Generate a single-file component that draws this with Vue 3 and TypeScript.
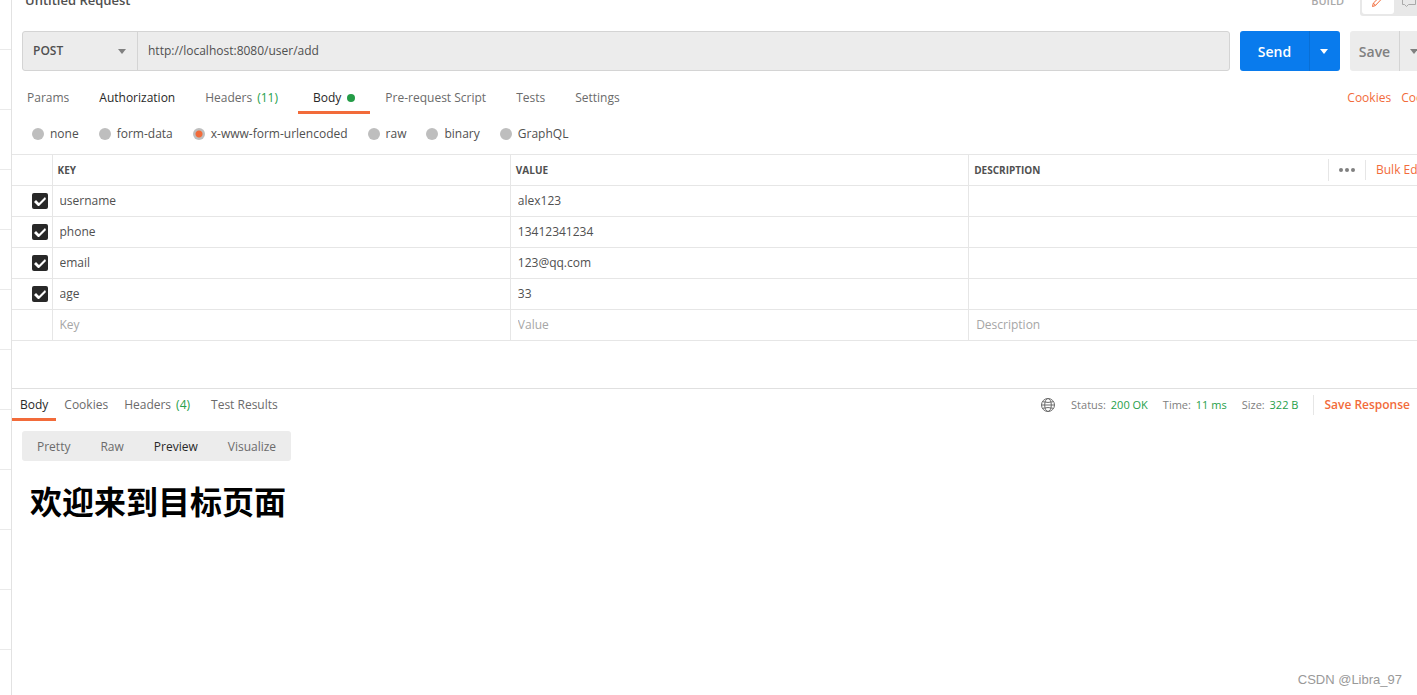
<script setup lang="ts">
import { ref } from 'vue'

interface Tab {
  label: string
  count?: number
  dot?: boolean
  strong?: boolean
}

interface Param {
  key: string
  value: string
  description: string
  enabled: boolean
}

const historyRows = 12

const method = ref('POST')
const methods = ['GET', 'POST', 'PUT', 'PATCH', 'DELETE']
const url = ref('http://localhost:8080/user/add')

const requestTabs: Tab[] = [
  { label: 'Params' },
  { label: 'Authorization', strong: true },
  { label: 'Headers', count: 11 },
  { label: 'Body', dot: true },
  { label: 'Pre-request Script' },
  { label: 'Tests' },
  { label: 'Settings' },
]
const requestTab = ref('Body')

const bodyModes = ['none', 'form-data', 'x-www-form-urlencoded', 'raw', 'binary', 'GraphQL']
const bodyMode = ref('x-www-form-urlencoded')

const params = ref<Param[]>([
  { key: 'username', value: 'alex123', description: '', enabled: true },
  { key: 'phone', value: '13412341234', description: '', enabled: true },
  { key: 'email', value: '123@qq.com', description: '', enabled: true },
  { key: 'age', value: '33', description: '', enabled: true },
])
const draft = ref({ key: '', value: '', description: '' })

const responseTabs: Tab[] = [
  { label: 'Body' },
  { label: 'Cookies' },
  { label: 'Headers', count: 4 },
  { label: 'Test Results' },
]
const responseTab = ref('Body')

const stats = [
  { label: 'Status:', value: '200 OK' },
  { label: 'Time:', value: '11 ms' },
  { label: 'Size:', value: '322 B' },
]

const views = ['Pretty', 'Raw', 'Preview', 'Visualize']
const view = ref('Preview')
</script>

<template>
  <div class="app">
    <aside class="sidebar" aria-label="History">
      <div v-for="n in historyRows" :key="n" class="sidebar-row"></div>
    </aside>

    <main class="main">
      <section class="request">
        <header class="title-bar">
          <h2 class="title">Untitled Request</h2>
          <span class="build">BUILD</span>
          <div class="mode-toggle">
            <button type="button" class="mode active" aria-label="Build">
              <svg width="14" height="14" viewBox="0 0 14 14" fill="none" stroke="currentColor">
                <path d="M1.5 12.5 2.3 9.2 9.1 2.4Q10.1 1.4 11.1 2.4Q12.1 3.4 11.1 4.4L4.3 11.6ZM2.5 9.2 4.5 11.4M8.1 3.4 10.3 5.4" />
              </svg>
            </button>
            <button type="button" class="mode" aria-label="Comments">
              <svg width="16" height="16" viewBox="0 0 16 16" fill="none" stroke="currentColor">
                <path d="M1.5 1.5H14.5V11.5H7.5L5.5 13.5 3.5 11.5H1.5Z" />
              </svg>
            </button>
          </div>
        </header>

        <form class="url-row" @submit.prevent>
          <div class="url-group">
            <div class="method">
              <select v-model="method" aria-label="Method">
                <option v-for="m in methods" :key="m">{{ m }}</option>
              </select>
              <span class="caret"></span>
            </div>
            <input v-model="url" class="url" type="text" aria-label="Request URL" />
          </div>
          <div class="split send">
            <button type="submit" class="split-label">Send</button>
            <button type="button" class="split-arrow" aria-label="Send options"><span class="caret"></span></button>
          </div>
          <div class="split save">
            <button type="button" class="split-label">Save</button>
            <button type="button" class="split-arrow" aria-label="Save options"><span class="caret"></span></button>
          </div>
        </form>

        <nav class="tabs">
          <button
            v-for="tab in requestTabs"
            :key="tab.label"
            type="button"
            class="tab"
            :class="{ active: tab.label === requestTab, strong: tab.strong }"
            @click="requestTab = tab.label"
          >
            {{ tab.label }}<span v-if="tab.count" class="count">({{ tab.count }})</span><span v-if="tab.dot" class="dot"></span>
          </button>
          <div class="tab-links">
            <a href="#">Cookies</a>
            <a href="#">Code</a>
          </div>
        </nav>

        <div class="body-modes" role="radiogroup" aria-label="Body type">
          <label v-for="m in bodyModes" :key="m" class="body-mode">
            <input v-model="bodyMode" type="radio" name="body-mode" :value="m" />
            {{ m }}
          </label>
        </div>

        <table class="params">
          <colgroup>
            <col class="check-col" />
            <col />
            <col />
            <col />
          </colgroup>
          <thead>
            <tr>
              <th></th>
              <th>KEY</th>
              <th>VALUE</th>
              <th>
                <div class="description-head">
                  <span class="description-label">DESCRIPTION</span>
                  <button type="button" class="more" aria-label="Columns">
                    <svg width="16" height="6" viewBox="0 0 16 6" fill="currentColor">
                      <circle cx="2" cy="3" r="2" />
                      <circle cx="8" cy="3" r="2" />
                      <circle cx="14" cy="3" r="2" />
                    </svg>
                  </button>
                  <button type="button" class="bulk">Bulk Edit</button>
                </div>
              </th>
            </tr>
          </thead>
          <tbody>
            <tr v-for="p in params" :key="p.key">
              <td class="check-cell"><input v-model="p.enabled" type="checkbox" :aria-label="`Use ${p.key}`" /></td>
              <td><input v-model.lazy="p.key" type="text" aria-label="Key" /></td>
              <td><input v-model="p.value" type="text" aria-label="Value" /></td>
              <td><input v-model="p.description" type="text" aria-label="Description" /></td>
            </tr>
            <tr>
              <td></td>
              <td><input v-model="draft.key" type="text" placeholder="Key" aria-label="New key" /></td>
              <td><input v-model="draft.value" type="text" placeholder="Value" aria-label="New value" /></td>
              <td><input v-model="draft.description" type="text" placeholder="Description" aria-label="New description" /></td>
            </tr>
          </tbody>
        </table>
      </section>

      <section class="response">
        <div class="response-bar">
          <nav class="response-tabs">
            <button
              v-for="tab in responseTabs"
              :key="tab.label"
              type="button"
              class="tab"
              :class="{ active: tab.label === responseTab }"
              @click="responseTab = tab.label"
            >
              {{ tab.label }}<span v-if="tab.count" class="count">({{ tab.count }})</span>
            </button>
          </nav>
          <div class="stats">
            <svg class="globe" width="16" height="16" viewBox="0 0 16 16" fill="none" stroke="currentColor">
              <circle cx="8" cy="8" r="6.5" />
              <ellipse cx="8" cy="8" rx="3.3" ry="6.5" />
              <path d="M2.5 4.7Q8 6.2 13.5 4.7M2.5 11.3Q8 9.8 13.5 11.3M1.5 8H14.5" />
            </svg>
            <span v-for="s in stats" :key="s.label" class="stat">
              {{ s.label }} <span class="stat-value">{{ s.value }}</span>
            </span>
            <button type="button" class="save-response">Save Response</button>
          </div>
        </div>

        <div class="views">
          <button
            v-for="v in views"
            :key="v"
            type="button"
            class="view"
            :class="{ active: v === view }"
            @click="view = v"
          >
            {{ v }}
          </button>
        </div>

        <h1 class="preview">欢迎来到目标页面</h1>
      </section>
    </main>

    <div class="watermark">CSDN @Libra_97</div>
  </div>
</template>

<style>
body {
  margin: 0;
  background: #fff;
}
</style>

<style scoped>
.app {
  position: relative;
  display: flex;
  height: 100vh;
  overflow: hidden;
  font: 12px/20px 'Open Sans', 'Noto Sans CJK SC', sans-serif;
  color: #505050;
}

button,
input,
select {
  margin: 0;
  padding: 0;
  border: 0;
  background: none;
  font: inherit;
  color: inherit;
  outline: none;
}

button,
select {
  cursor: pointer;
}

a {
  color: #f26b3a;
  text-decoration: none;
}

.sidebar {
  flex: none;
  width: 11px;
  border-right: 1px solid #e2e2e2;
  overflow: hidden;
}

.sidebar-row {
  box-sizing: border-box;
  height: 60px;
  border-bottom: 1px solid #eaeaea;
}

.sidebar-row:first-child {
  height: 50px;
}

.main {
  flex: 1;
  min-width: 0;
  overflow: hidden;
}

/* The panes run slightly past the right window edge. */
.request,
.response {
  margin-right: -10px;
}

.title-bar {
  display: flex;
  align-items: center;
  height: 31px;
  margin: -15px 0 15px;
  padding-left: 13px;
}

.title {
  flex: 1;
  margin: 0;
  padding-bottom: 2px;
  font-size: 13px;
  font-weight: 600;
}

.build {
  margin-right: 16px;
  font-size: 11px;
  font-weight: 600;
  color: #a9a9a9;
}

.mode-toggle {
  display: flex;
  box-sizing: border-box;
  width: 67px;
  height: 31px;
  padding: 2px;
  border-radius: 3px;
  background: #e8e8e8;
}

.mode {
  display: flex;
  flex: 1;
  align-items: center;
  justify-content: center;
  border-radius: 3px;
  color: #a9a9a9;
}

.mode.active {
  background: #fff;
  color: #f26b3a;
}

.url-row {
  display: flex;
  gap: 10px;
  height: 40px;
  padding-left: 10px;
}

.url-group {
  display: flex;
  flex: 1;
  border: 1px solid #d4d4d4;
  border-radius: 3px;
  background: #ececec;
}

.method {
  display: flex;
  align-items: center;
  width: 114px;
  border-right: 1px solid #d4d4d4;
}

.method select {
  flex: 1;
  height: 100%;
  padding-left: 10px;
  appearance: none;
  font-weight: 600;
}

.method .caret {
  margin: 0 11px 0 -20px;
  color: #808080;
  pointer-events: none;
}

.caret {
  display: block;
  border: 4px solid transparent;
  border-top: 5px solid currentColor;
  border-bottom: 0;
}

.url {
  flex: 1;
  padding: 0 10px;
}

.split {
  display: flex;
  border-radius: 3px;
  overflow: hidden;
  font-size: 14px;
  font-weight: 600;
}

.split-label {
  padding-top: 2px;
}

.split-arrow {
  display: flex;
  align-items: center;
  justify-content: center;
  border-left: 1px solid;
}

.send {
  width: 100px;
  background: #097bed;
  color: #fff;
}

.send .split-label {
  flex: 1;
}

.send .split-arrow {
  width: 31px;
  padding-right: 2px;
  border-color: #086fd6;
}

.save {
  width: 77px;
  background: #ececec;
  color: #808080;
}

.save .split-label {
  flex: 1;
}

.save .split-arrow {
  width: 28px;
  border-color: #d4d4d4;
}

.tabs {
  display: flex;
  padding-top: 11px;
}

.tab {
  display: flex;
  align-items: center;
  height: 32px;
  padding-top: 2px;
  border-bottom: 3px solid transparent;
  white-space: nowrap;
  color: #6b6b6b;
}

.tabs .tab {
  padding: 2px 15px 0;
}

.tab.strong,
.tab.active {
  color: #282828;
}

.tab.active {
  border-bottom-color: #f26b3a;
}

.count {
  margin: 0 5px;
  color: #26a04a;
}

.dot {
  width: 8px;
  height: 8px;
  margin-left: 6px;
  border-radius: 50%;
  background: #249c47;
}

.tab-links {
  display: flex;
  align-items: center;
  gap: 10px;
  height: 32px;
  margin: 0 -3px 0 auto;
}

.body-modes {
  display: flex;
  align-items: center;
  gap: 20px;
  height: 40px;
  padding-left: 20px;
}

.body-mode {
  display: flex;
  align-items: center;
  gap: 6px;
}

.body-mode input {
  width: 12px;
  height: 12px;
  border-radius: 50%;
  appearance: none;
  background: #bebebe;
}

.body-mode input:checked {
  background: radial-gradient(circle, #f26b3a 3px, #bebebe 4px);
}

.params {
  width: 100%;
  border-collapse: collapse;
  table-layout: fixed;
  border-top: 1px solid #e6e6e6;
}

.check-col {
  width: 40px;
}

.params th,
.params td {
  box-sizing: border-box;
  height: 31px;
  padding: 0 0 0 7px;
  border-bottom: 1px solid #e6e6e6;
  border-right: 1px solid #e6e6e6;
}

.params th {
  padding-left: 5px;
  text-align: left;
  font-size: 10px;
  font-weight: 700;
}

.params th:last-child,
.params td:last-child {
  border-right: 0;
}

.params td input[type='text'] {
  display: block;
  width: 100%;
  height: 20px;
}

.params input::placeholder {
  color: #a6a6a6;
  opacity: 1;
}

.params input[type='checkbox'] {
  display: block;
  width: 16px;
  height: 16px;
  margin-left: 13px;
  border-radius: 2px;
  appearance: none;
  background: #282828;
}

.params input[type='checkbox']:checked::after {
  content: '';
  display: block;
  width: 16px;
  height: 16px;
  background: #fff;
  clip-path: polygon(2px 9px, 4px 7px, 7px 10px, 13px 4px, 14px 6px, 7px 13px, 6px 13px);
}

.description-head {
  display: flex;
  align-items: center;
}

.description-label {
  flex: 1;
}

.more {
  display: flex;
  align-items: center;
  justify-content: center;
  width: 37px;
  height: 22px;
  border-left: 1px solid #e6e6e6;
  color: #808080;
}

.bulk {
  width: 62px;
  padding-left: 10px;
  border-left: 1px solid #e6e6e6;
  text-align: left;
  font-size: 12px;
  font-weight: 400;
  color: #f26b3a;
}

.response {
  margin-top: 47px;
  border-top: 1px solid #e0e0e0;
}

.response-bar {
  display: flex;
  justify-content: space-between;
}

.response-tabs {
  display: flex;
}

.response-tabs .tab {
  padding: 2px 8px 0;
}

.stats {
  display: flex;
  align-items: center;
  gap: 15px;
  padding-right: 17px;
  font-size: 11px;
  color: #808080;
}

.globe {
  color: #6b6b6b;
}

.stat-value {
  margin-left: 2px;
  color: #26a04a;
}

.save-response {
  padding-left: 10px;
  border-left: 1px solid #e6e6e6;
  font-size: 12px;
  font-weight: 600;
  color: #f26b3a;
}

.views {
  display: inline-flex;
  height: 30px;
  margin: 10px 0 0 10px;
  border-radius: 3px;
  background: #ececec;
}

.view {
  padding: 2px 15px 0;
  color: #6b6b6b;
}

.view.active {
  color: #282828;
}

.preview {
  margin: 15px 0 0 18px;
  font: 700 32px/48px 'Noto Sans CJK SC', sans-serif;
  color: #000;
}

.watermark {
  position: absolute;
  right: 15px;
  bottom: 5px;
  font: 13px/20px 'Liberation Sans', sans-serif;
  color: #999;
}
</style>
